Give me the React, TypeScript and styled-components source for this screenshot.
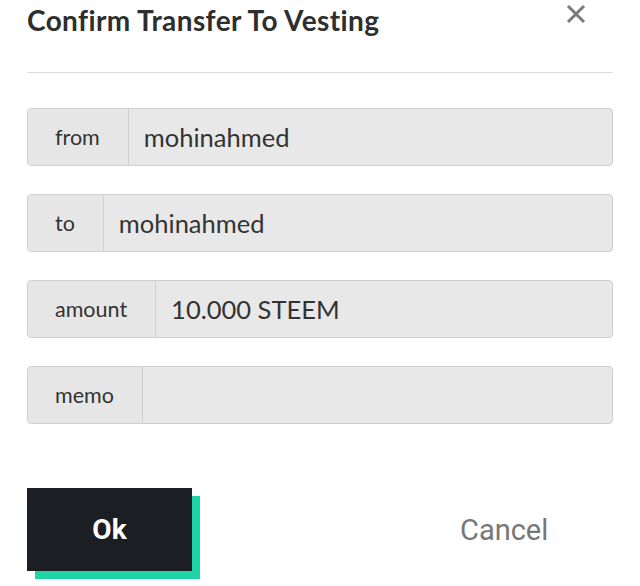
import React from 'react';
import styled, { createGlobalStyle } from 'styled-components';

const GlobalStyle = createGlobalStyle`
  html, body {
    margin: 0;
    padding: 0;
    background: #ffffff;
  }
  body {
    font-family: Lato, "Noto Sans", sans-serif;
  }
`;

interface Field {
  label: string;
  value: string;
}

const fields: Field[] = [
  { label: 'from', value: 'mohinahmed' },
  { label: 'to', value: 'mohinahmed' },
  { label: 'amount', value: '10.000 STEEM' },
  { label: 'memo', value: '' },
];

const App = () => {
  return (
    <>
      <GlobalStyle />
      <Dialog>
        <Header>
          <Title>Confirm Transfer To Vesting</Title>
          <CloseButton aria-label="close">
            <svg width="20" height="20" viewBox="0 0 20 20">
              <path d="M2 2 L18 18 M18 2 L2 18" stroke="#7a7a7a" strokeWidth="3" strokeLinecap="butt" />
            </svg>
          </CloseButton>
        </Header>
        <Divider />
        <Fields>
          {fields.map((f) => (
            <InputGroup key={f.label}>
              <Label>{f.label}</Label>
              <Value>{f.value}</Value>
            </InputGroup>
          ))}
        </Fields>
        <Actions>
          <OkButton>Ok</OkButton>
          <CancelButton>Cancel</CancelButton>
        </Actions>
      </Dialog>
    </>
  );
};

export default App;

const Dialog = styled.div`
  width: 640px;
  height: 586px;
  box-sizing: border-box;
  padding: 0 27px 0 27px;
  display: flex;
  flex-direction: column;
  overflow: hidden;
`;

const Header = styled.div`
  display: flex;
  justify-content: space-between;
  align-items: flex-start;
  height: 72px;
`;

const Title = styled.h1`
  margin: 3px 0 0 0;
  font-size: 28px;
  font-weight: 700;
  color: #2e2e2e;
  letter-spacing: 0.4px;
`;

const CloseButton = styled.button`
  border: none;
  background: none;
  padding: 0;
  margin: 4px 27px 0 0;
  width: 20px;
  height: 20px;
  cursor: pointer;
`;

const Divider = styled.div`
  height: 1px;
  background: #dcdcdc;
`;

const Fields = styled.div`
  display: flex;
  flex-direction: column;
  gap: 28px;
  margin-top: 35px;
`;

const InputGroup = styled.div`
  display: flex;
  height: 58px;
  box-sizing: border-box;
  border: 1px solid #cfcfcf;
  border-radius: 4px;
  background: #e8e8e8;
  overflow: hidden;
`;

const Label = styled.div`
  display: flex;
  align-items: center;
  padding: 0 28px 0 27px;
  border-right: 1px solid #cfcfcf;
  background: #e6e6e6;
  font-size: 21.5px;
  color: #333333;
`;

const Value = styled.div`
  flex: 1;
  display: flex;
  align-items: center;
  padding-left: 15px;
  font-size: 25.5px;
  color: #333333;
`;

const Actions = styled.div`
  display: flex;
  align-items: flex-start;
  margin-top: 64px;
`;

const OkButton = styled.button`
  width: 165px;
  height: 83px;
  border: none;
  background: #1b1f23;
  box-shadow: 8px 8px 0 #1fd3a7;
  color: #ffffff;
  font-family: Roboto, sans-serif;
  font-weight: 700;
  font-size: 28px;
  cursor: pointer;
`;

const CancelButton = styled.button`
  border: none;
  background: none;
  margin-left: 268px;
  height: 83px;
  padding: 0;
  color: #777777;
  font-family: Roboto, sans-serif;
  font-size: 29px;
  cursor: pointer;
`;
